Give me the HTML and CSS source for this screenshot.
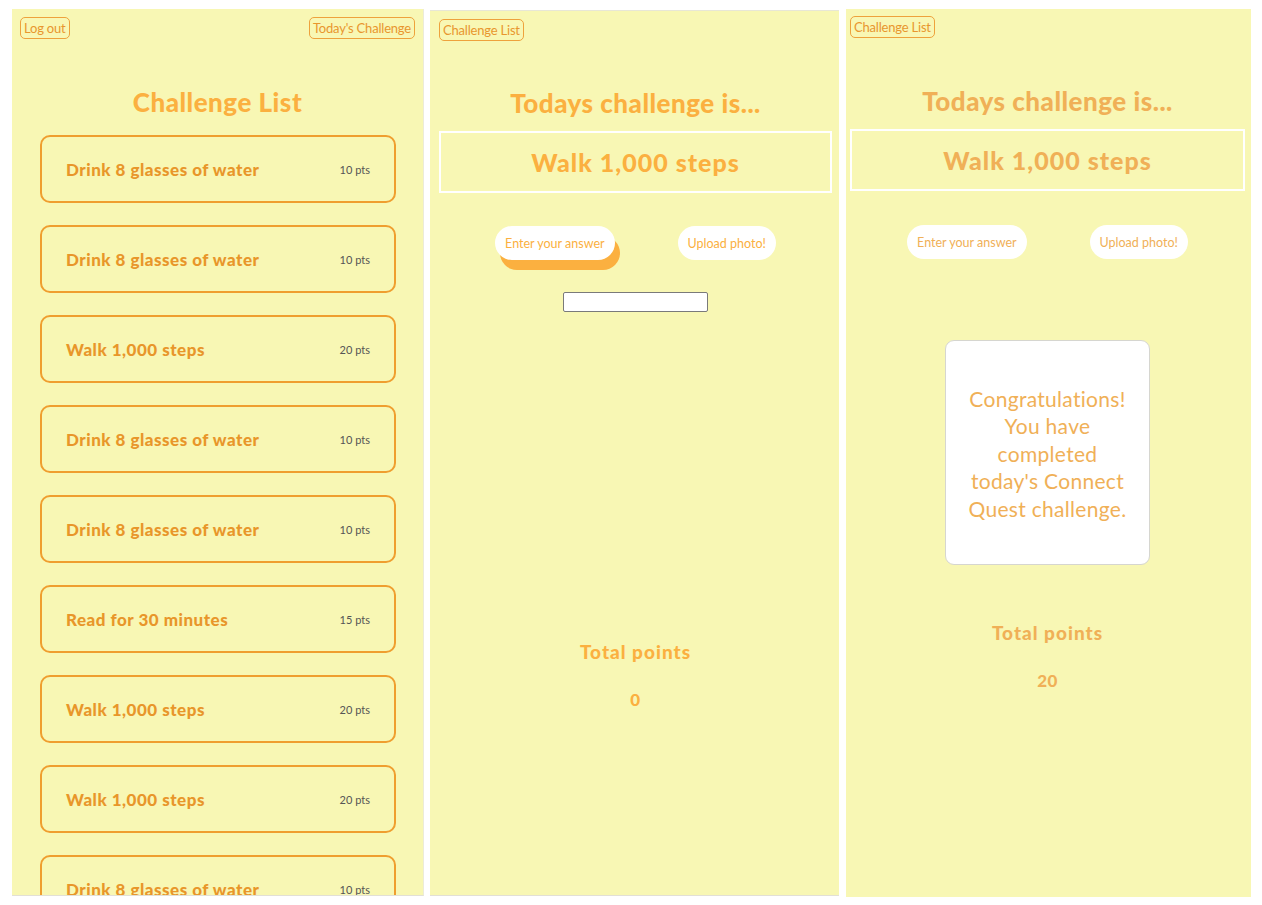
FILE: index.html
```html
<!DOCTYPE html>
<html>
<head>
<meta charset="utf-8">
<title>Connect Quest</title>
<link rel="stylesheet" href="styles.css">
</head>
<body>
<div class="screens">
  <section class="screen list-screen">
    <div class="topbar spread">
      <button class="nav-btn">Log out</button>
      <button class="nav-btn">Today's Challenge</button>
    </div>
    <h1 class="title">Challenge List</h1>
    <div class="cards">
      <div class="card"><span class="card-name">Drink 8 glasses of water</span><span class="pts">10 pts</span></div>
      <div class="card"><span class="card-name">Drink 8 glasses of water</span><span class="pts">10 pts</span></div>
      <div class="card"><span class="card-name">Walk 1,000 steps</span><span class="pts">20 pts</span></div>
      <div class="card"><span class="card-name">Drink 8 glasses of water</span><span class="pts">10 pts</span></div>
      <div class="card"><span class="card-name">Drink 8 glasses of water</span><span class="pts">10 pts</span></div>
      <div class="card"><span class="card-name">Read for 30 minutes</span><span class="pts">15 pts</span></div>
      <div class="card"><span class="card-name">Walk 1,000 steps</span><span class="pts">20 pts</span></div>
      <div class="card"><span class="card-name">Walk 1,000 steps</span><span class="pts">20 pts</span></div>
      <div class="card"><span class="card-name">Drink 8 glasses of water</span><span class="pts">10 pts</span></div>
    </div>
  </section>

  <section class="screen today-screen">
    <div class="topbar">
      <button class="nav-btn">Challenge List</button>
    </div>
    <h1 class="title">Todays challenge is...</h1>
    <div class="challenge-box">Walk 1,000 steps</div>
    <div class="actions">
      <button class="pill pill-active">Enter your answer</button>
      <button class="pill">Upload photo!</button>
    </div>
    <input class="answer" type="text">
    <div class="total">
      <h2 class="total-label">Total points</h2>
      <div class="total-value">0</div>
    </div>
  </section>

  <section class="screen done-screen">
    <div class="topbar">
      <button class="nav-btn">Challenge List</button>
    </div>
    <h1 class="title">Todays challenge is...</h1>
    <div class="challenge-box">Walk 1,000 steps</div>
    <div class="actions">
      <button class="pill">Enter your answer</button>
      <button class="pill">Upload photo!</button>
    </div>
    <div class="congrats">Congratulations! You have completed today's Connect Quest challenge.</div>
    <div class="total">
      <h2 class="total-label">Total points</h2>
      <div class="total-value">20</div>
    </div>
  </section>
</div>
</body>
</html>
```

FILE: styles.css
```css
* { box-sizing: border-box; }

body {
  margin: 0;
  background: #ffffff;
  font-family: "Lato", "Open Sans", sans-serif;
}

.screens {
  display: flex;
  align-items: flex-start;
  padding: 9px 0 0 12px;
}

.screen {
  background: #f8f7b4;
  height: 887px;
  overflow: hidden;
  display: flex;
  flex-direction: column;
  border-bottom: 1px solid #e2e0d6;
}

.list-screen {
  width: 412px;
  padding: 8px 8px 0;
  border-right: 1px solid #ecebd8;
}

.today-screen {
  width: 409px;
  margin-left: 6px;
  margin-top: 1px;
  height: 886px;
  padding: 8px 7px 0 9px;
  border-top: 1px solid #e8e7d6;
  align-items: center;
}

.done-screen {
  width: 405px;
  margin-left: 7px;
  height: 888px;
  padding: 7px 6px 0 4px;
  align-items: center;
  border-bottom: none;
}

.topbar {
  display: flex;
  width: 100%;
}

.spread { justify-content: space-between; }

.nav-btn {
  font-family: "Lato", sans-serif;
  font-size: 13px;
  color: #e8962e;
  background: transparent;
  border: 1px solid #eea23c;
  border-radius: 5px;
  padding: 0 3px;
  height: 22px;
  line-height: 20px;
  letter-spacing: -0.2px;
}

.title {
  margin: 0;
  text-align: center;
  font-size: 26px;
  font-weight: 900;
  letter-spacing: 0.5px;
  color: #fbb040;
  line-height: 30px;
}

.list-screen .title { margin-top: 48px; }
.today-screen .title { margin-top: 47px; }
.done-screen .title { margin-top: 48px; }

.cards {
  display: flex;
  flex-direction: column;
  gap: 22px;
  margin: 18px 19px 0 20px;
}

.card {
  flex: none;
  height: 68px;
  border: 2px solid #ef9e2f;
  border-radius: 10px;
  display: flex;
  align-items: center;
  justify-content: space-between;
  padding: 0 24px 0 24px;
}

.card-name {
  font-size: 17px;
  font-weight: 900;
  letter-spacing: 0.5px;
  color: #e8962a;
}

.pts {
  font-size: 11px;
  color: #555555;
}

.challenge-box {
  width: 100%;
  height: 62px;
  margin-top: 13px;
  border: 2px solid #ffffff;
  display: flex;
  align-items: center;
  justify-content: center;
  font-size: 25px;
  font-weight: 900;
  letter-spacing: 1px;
  color: #fbb040;
}

.actions {
  display: flex;
  justify-content: center;
  gap: 63px;
  margin-top: 33px;
}

.pill {
  font-family: "Lato", sans-serif;
  font-size: 12.5px;
  color: #fbb040;
  background: #ffffff;
  border: none;
  border-radius: 17px;
  height: 34px;
  padding: 0 10px;
}

.pill-active {
  box-shadow: 5px 10px 0 #fbb040;
}

.answer {
  width: 145px;
  height: 20px;
  margin-top: 32px;
  border: 1px solid #7a7a7a;
  border-radius: 2px;
  background: #ffffff;
}

.total {
  display: flex;
  flex-direction: column;
  align-items: center;
}

.today-screen .total { margin-top: 328px; }
.done-screen .total { margin-top: 56px; }

.total-label {
  margin: 0;
  font-size: 19px;
  font-weight: 900;
  letter-spacing: 1px;
  color: #fbb040;
  line-height: 24px;
}

.total-value {
  margin-top: 24px;
  font-size: 17px;
  font-weight: 900;
  letter-spacing: 0.5px;
  color: #fbb040;
  line-height: 24px;
}

.done-screen .title,
.done-screen .challenge-box,
.done-screen .total-label,
.done-screen .total-value,
.done-screen .pill,
.done-screen .congrats {
  color: #f0b057;
}

.done-screen .nav-btn { color: #e8962e; }

.done-screen .challenge-box { margin-top: 13px; }
.done-screen .actions { margin-top: 34px; }

.congrats {
  width: 205px;
  height: 225px;
  margin-top: 81px;
  background: #ffffff;
  border: 1px solid #d6d6d0;
  border-radius: 9px;
  display: flex;
  align-items: center;
  justify-content: center;
  text-align: center;
  font-size: 21px;
  letter-spacing: 0.3px;
  line-height: 27.5px;
  padding: 2px 20px 0;
}
```
